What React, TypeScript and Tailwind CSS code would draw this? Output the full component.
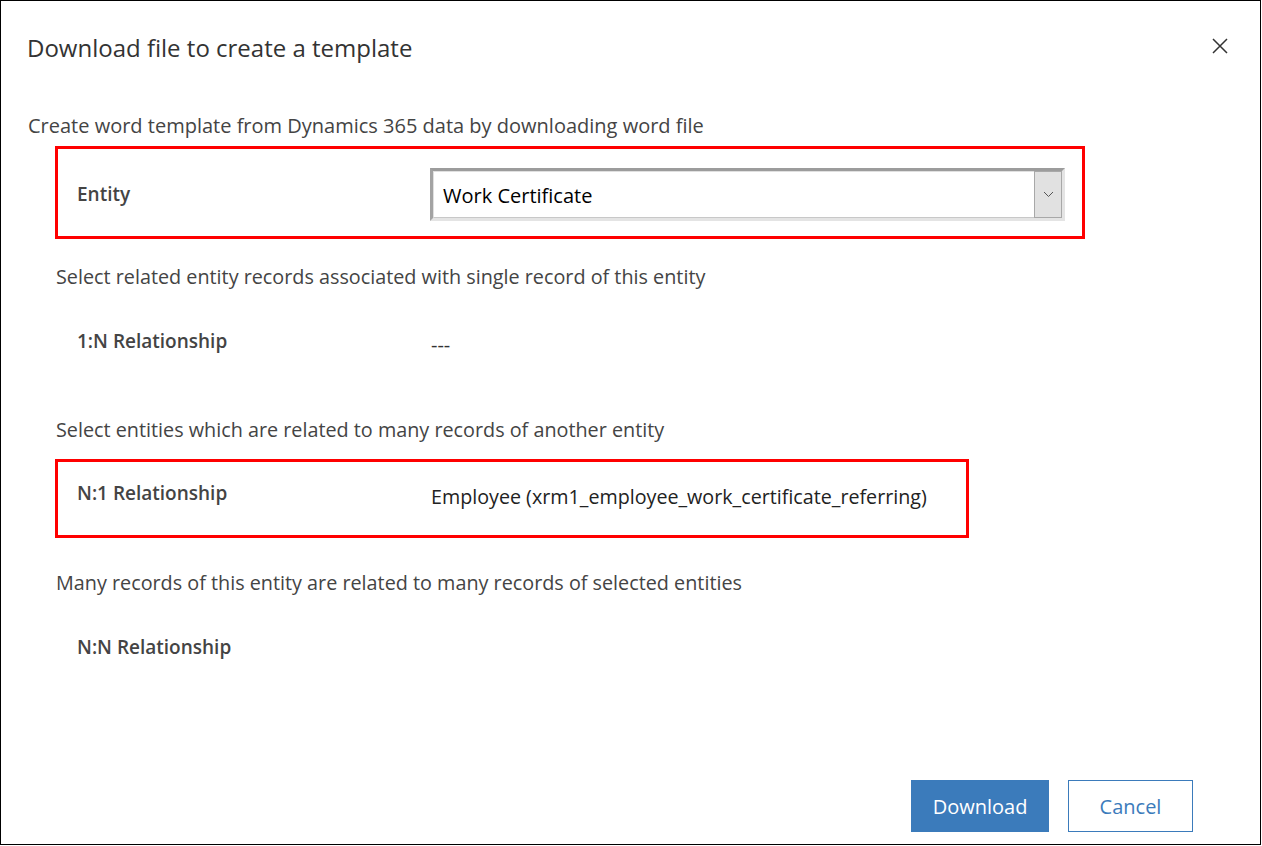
import React from "react";

const font = "font-['Segoe_UI','Open_Sans','Noto_Sans',sans-serif]";

function Chevron() {
  return (
    <svg width="11" height="7" viewBox="0 0 11 7" fill="none">
      <path d="M1 1l4.5 4.5L10 1" stroke="#555" strokeWidth="1" />
    </svg>
  );
}

function CloseIcon() {
  return (
    <svg width="16" height="16" viewBox="0 0 16 16" fill="none">
      <path d="M1 1l14 14M15 1L1 15" stroke="#333" strokeWidth="1.5" />
    </svg>
  );
}

export default function App() {
  return (
    <div className={`w-[1261px] h-[845px] border border-black bg-white flex flex-col text-[#444] ${font}`}>
      {/* Header */}
      <div className="mt-[31px] h-[32px] flex items-center justify-between pl-[26px] pr-[30px]">
        <h1 className="text-[24px] leading-[32px] text-[#333] font-normal">Download file to create a template</h1>
        <button className="w-[20px] h-[20px] flex items-center justify-center -mt-[5px]">
          <CloseIcon />
        </button>
      </div>

      <p className="mt-[48px] h-[28px] pl-[27px] text-[20px] leading-[28px]">
        Create word template from Dynamics 365 data by downloading word file
      </p>

      {/* Entity box */}
      <div className="mt-[6px] ml-[54px] w-[1030px] h-[93px] border-[3px] border-[#ff0000] flex items-center pl-[19px] pt-[3px]">
        <div className="w-[353px] text-[19px] font-semibold leading-[28px]">Entity</div>
        <div className="w-[635px] h-[53px] flex border-t-[3px] border-l-[3px] border-r-[3px] border-b-[3px] border-t-[#9c9c9c] border-l-[#a3a3a3] border-r-[#e4e4e4] border-b-[#e4e4e4]">
          <div className="flex-1 flex items-center bg-white border-t border-l border-b border-t-[#e0e0e0] border-l-[#e0e0e0] border-b-[#c8c8c8] pl-[9px] pt-[3px] text-[20px] text-black">
            Work Certificate
          </div>
          <div className="w-[28px] bg-[#e1e1e1] border border-[#a8a8a8] flex items-center justify-center">
            <Chevron />
          </div>
        </div>
      </div>

      <p className="mt-[24px] h-[28px] pl-[55px] text-[19.8px] leading-[28px]">
        Select related entity records associated with single record of this entity
      </p>

      <div className="mt-[36px] h-[28px] flex pl-[76px]">
        <div className="w-[354px] text-[19px] font-semibold leading-[28px]">1:N Relationship</div>
        <div className="pt-[4px] text-[20px] leading-[28px] text-[#333]">---</div>
      </div>

      <p className="mt-[61px] h-[28px] pl-[55px] text-[19.8px] leading-[28px]">
        Select entities which are related to many records of another entity
      </p>

      {/* N:1 box */}
      <div className="mt-[15px] ml-[54px] w-[914px] h-[79px] border-[3px] border-[#ff0000] flex items-start pl-[19px]">
        <div className="mt-[17px] w-[354px] text-[19px] font-semibold leading-[28px]">N:1 Relationship</div>
        <div className="mt-[21px] text-[19.7px] leading-[28px] text-[#222]">
          Employee (xrm1_employee_work_certificate_referring)
        </div>
      </div>

      <p className="mt-[31px] h-[28px] pl-[55px] text-[19.8px] leading-[28px]">
        Many records of this entity are related to many records of selected entities
      </p>

      <div className="mt-[36px] h-[28px] flex pl-[76px]">
        <div className="w-[354px] text-[19px] font-semibold leading-[28px]">N:N Relationship</div>
      </div>

      {/* Footer buttons */}
      <div className="mt-auto mb-[12px] flex justify-end gap-[19px] pr-[67px]">
        <button className="w-[138px] h-[52px] bg-[#3b7bbb] text-white text-[20px] pt-[2px]">Download</button>
        <button className="w-[125px] h-[52px] border border-[#3b7bbb] text-[#3b7bbb] text-[20px] bg-white pt-[2px]">
          Cancel
        </button>
      </div>
    </div>
  );
}
